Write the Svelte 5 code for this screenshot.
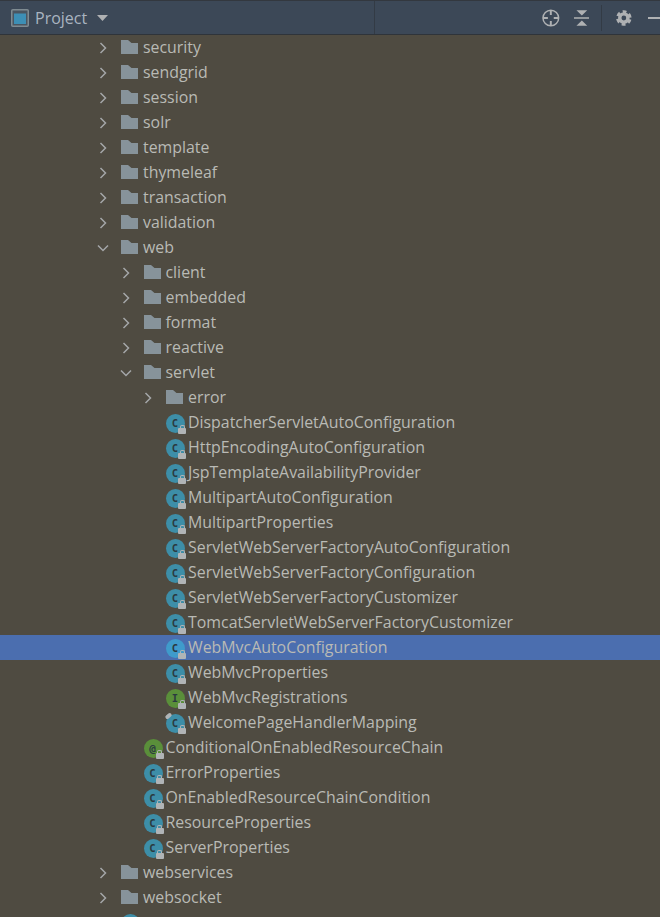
<script lang="ts">
	type Row = { name: string; depth: number; kind: string; open?: boolean; selected?: boolean };

	const rows: Row[] = [
		{ name: 'security', depth: 0, kind: 'folder' },
		{ name: 'sendgrid', depth: 0, kind: 'folder' },
		{ name: 'session', depth: 0, kind: 'folder' },
		{ name: 'solr', depth: 0, kind: 'folder' },
		{ name: 'template', depth: 0, kind: 'folder' },
		{ name: 'thymeleaf', depth: 0, kind: 'folder' },
		{ name: 'transaction', depth: 0, kind: 'folder' },
		{ name: 'validation', depth: 0, kind: 'folder' },
		{ name: 'web', depth: 0, kind: 'folder', open: true },
		{ name: 'client', depth: 1, kind: 'folder' },
		{ name: 'embedded', depth: 1, kind: 'folder' },
		{ name: 'format', depth: 1, kind: 'folder' },
		{ name: 'reactive', depth: 1, kind: 'folder' },
		{ name: 'servlet', depth: 1, kind: 'folder', open: true },
		{ name: 'error', depth: 2, kind: 'folder' },
		{ name: 'DispatcherServletAutoConfiguration', depth: 2, kind: 'class' },
		{ name: 'HttpEncodingAutoConfiguration', depth: 2, kind: 'class' },
		{ name: 'JspTemplateAvailabilityProvider', depth: 2, kind: 'class' },
		{ name: 'MultipartAutoConfiguration', depth: 2, kind: 'class' },
		{ name: 'MultipartProperties', depth: 2, kind: 'class' },
		{ name: 'ServletWebServerFactoryAutoConfiguration', depth: 2, kind: 'class' },
		{ name: 'ServletWebServerFactoryConfiguration', depth: 2, kind: 'class' },
		{ name: 'ServletWebServerFactoryCustomizer', depth: 2, kind: 'class' },
		{ name: 'TomcatServletWebServerFactoryCustomizer', depth: 2, kind: 'class' },
		{ name: 'WebMvcAutoConfiguration', depth: 2, kind: 'class', selected: true },
		{ name: 'WebMvcProperties', depth: 2, kind: 'class' },
		{ name: 'WebMvcRegistrations', depth: 2, kind: 'interface' },
		{ name: 'WelcomePageHandlerMapping', depth: 2, kind: 'inherited' },
		{ name: 'ConditionalOnEnabledResourceChain', depth: 1, kind: 'annotation' },
		{ name: 'ErrorProperties', depth: 1, kind: 'class' },
		{ name: 'OnEnabledResourceChainCondition', depth: 1, kind: 'class' },
		{ name: 'ResourceProperties', depth: 1, kind: 'class' },
		{ name: 'ServerProperties', depth: 1, kind: 'class' },
		{ name: 'webservices', depth: 0, kind: 'folder' },
		{ name: 'websocket', depth: 0, kind: 'folder' },
		{ name: 'AbstractDependsOnBeanFactoryPostProcessor', depth: 0, kind: 'class' }
	];

	const letters: Record<string, string> = { class: 'C', inherited: 'C', interface: 'I', annotation: '@' };
</script>

<div class="panel">
	<header class="toolbar">
		<div class="title">
			<svg class="project-icon" width="18" height="18" viewBox="0 0 18 18">
				<rect x="0.75" y="0.75" width="16.5" height="16.5" rx="1" fill="#4a5560" stroke="#7f8b91" stroke-width="1.5" />
				<rect x="3" y="4.5" width="12" height="10.5" fill="#3d8fb5" />
			</svg>
			<span>Project</span>
			<svg class="caret" width="11" height="6" viewBox="0 0 11 6"><path d="M0 0h11L5.5 6z" fill="#afb1b3" /></svg>
		</div>
		<div class="divider first"></div>
		<div class="actions">
			<svg width="18" height="18" viewBox="0 0 18 18" fill="none" stroke="#afb1b3">
				<circle cx="9" cy="9" r="8" stroke-width="1.5" />
				<path d="M9 1v5M9 12v5M1 9h5M12 9h5" stroke-width="2" />
			</svg>
			<svg class="collapse" width="16" height="18" viewBox="0 0 16 18" fill="#afb1b3">
				<path d="M2.5 1h11L8 6.5zM0 8.2h16v1.6H0zM8 11.5l5.5 5.5h-11z" />
			</svg>
			<div class="divider"></div>
			<svg class="gear" width="16" height="16" viewBox="0 0 16 16" fill="none" stroke="#afb1b3">
				<circle cx="8" cy="8" r="4.2" stroke-width="3.5" />
				<circle cx="8" cy="8" r="6.4" stroke-width="3" stroke-dasharray="3.8 2.9" transform="rotate(13 8 8)" />
			</svg>
			<div class="minus"></div>
		</div>
	</header>

	<div class="tree">
		{#each rows as row (row.name)}
			<div class="row" class:selected={row.selected} style="padding-left: {row.depth * 22.5}px">
				<span class="arrow">
					{#if row.kind === 'folder'}
						<svg width="12" height="12" viewBox="0 0 12 12" fill="none" stroke="#a4a6a8" stroke-width="1.5">
							{#if row.open}
								<path d="M1 3.5l5 5 5-5" />
							{:else}
								<path d="M3.5 1l5 5-5 5" />
							{/if}
						</svg>
					{/if}
				</span>
				{#if row.kind === 'folder'}
					<svg class="folder" width="17" height="14" viewBox="0 0 17 14">
						<path d="M0 0h7l3.5 3H17v11H0z" fill="#87939a" />
					</svg>
				{:else}
					<span class="badge {row.kind}">
						<span class="letter">{letters[row.kind]}</span>
						{#if row.kind === 'inherited'}<span class="bolt"></span>{/if}
						<span class="lock"></span>
					</span>
				{/if}
				<span class="name">{row.name}</span>
			</div>
		{/each}
	</div>
</div>

<style>
	:global(body) { margin: 0; background: #4f4b41; }
	.panel { width: 660px; height: 917px; overflow: hidden; background: #4f4b41; font-family: "Open Sans", "Noto Sans", sans-serif; }
	.toolbar { height: 33px; display: flex; align-items: center; background: #3c4857; border-top: 1px solid #33383f; border-bottom: 1px solid #2f343a; }
	.title { display: flex; align-items: center; width: 374px; box-sizing: border-box; padding-left: 11px; color: #a9b4c0; font-size: 16px; }
	.title span { margin-left: 6px; }
	.caret { margin-left: 10px; margin-top: 1px; }
	.divider { width: 1px; height: 33px; background: #333b45; flex: none; }
	.actions { flex: 1; display: flex; align-items: center; padding-left: 167px; overflow: hidden; }
	.collapse { margin-left: 14px; }
	.actions .divider { margin-left: 12px; height: 26px; }
	.gear { margin-left: 14px; }
	.minus { width: 12px; height: 2px; background: #afb1b3; margin-left: 16px; flex: none; }

	.tree { display: flex; flex-direction: column; }
	.row { height: 25px; flex: none; display: flex; align-items: center; margin-left: 97px; color: #b9bab5; font-size: 15.9px; white-space: nowrap; }
	.row.selected { margin-left: 0; border-left: 97px solid #4b6eaf; background: #4b6eaf; }
	.row:last-child .name { margin-top: 1px; }
	.arrow { width: 12px; height: 12px; flex: none; display: flex; margin-right: 12px; }
	.name { margin-top: -2px; }
	.folder { flex: none; margin-right: 5px; margin-top: -1px; }
	.badge { position: relative; width: 19px; height: 19px; border-radius: 50%; flex: none; margin-right: 3px; margin-top: 2px; background: #3d8ea8; display: flex; align-items: center; justify-content: center; }
	.selected .badge { background: #3f9bcb; }
	.badge.interface, .badge.annotation { background: #5a8f3a; }
	.letter { font-family: "DejaVu Sans Mono", monospace; font-size: 10.5px; font-weight: 700; line-height: 1; color: #2b3a40; margin-left: -1px; }
	.annotation .letter { font-size: 11px; }
	.lock { position: absolute; right: -1px; bottom: -1px; width: 8px; height: 6px; background: #b0b4b6; border-radius: 1px; }
	.lock::before { content: ""; position: absolute; left: 1.5px; top: -3px; width: 3px; height: 3px; border: 1px solid #b0b4b6; border-bottom: none; border-radius: 2px 2px 0 0; }
	.bolt { position: absolute; left: -1px; top: 0; width: 7px; height: 4px; background: #b0b4b6; border-radius: 2px; transform: rotate(-40deg); }
</style>
